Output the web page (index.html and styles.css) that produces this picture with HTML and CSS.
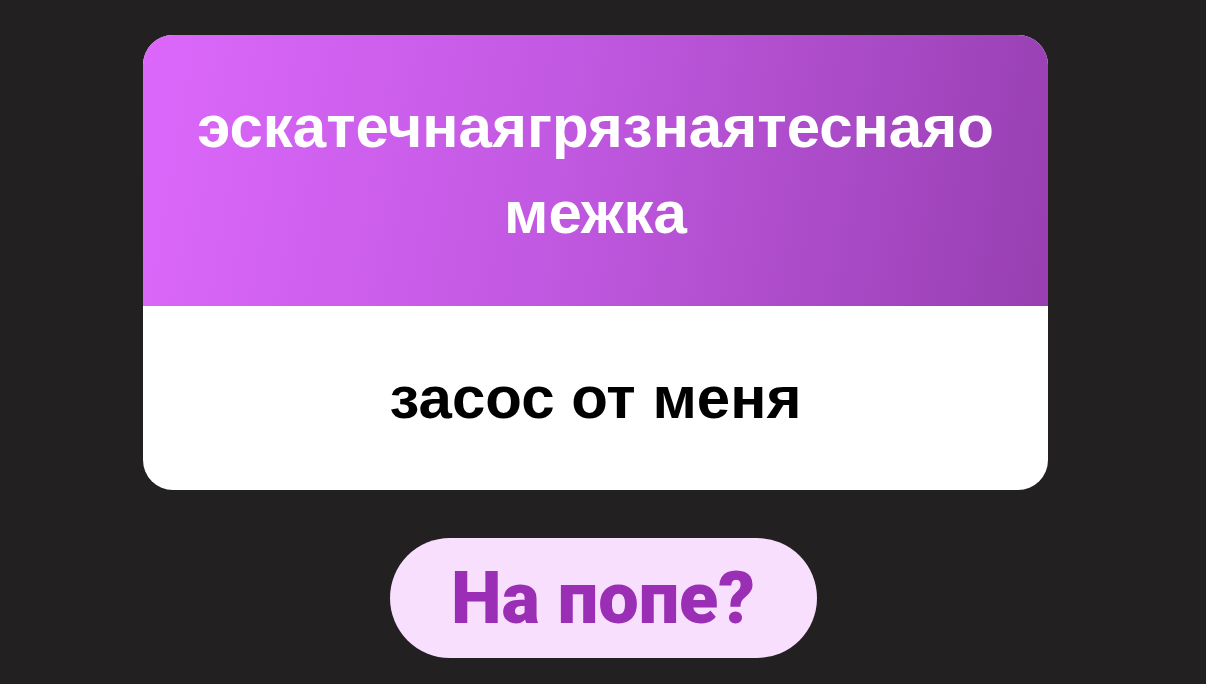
FILE: index.html
```html
<!DOCTYPE html>
<html lang="ru">
<head>
    <meta charset="UTF-8">
    <meta name="viewport" content="width=device-width, initial-scale=1.0">
    <title>Карточка</title>
    <link rel="stylesheet" href="styles.css">
</head>
<body>

    <div class="screen">
        <div class="card">
            <div class="card-front">эскатечнаягрязнаятеснаяомежка</div>
            <div class="card-back">засос от меня</div>
        </div>

        <button class="answer-btn">На попе?</button>
    </div>

</body>
</html>
```

FILE: styles.css
```css
body {
    margin: 0;
    padding: 0;
    background-color: #232022;
    font-family: 'Liberation Sans', Arial, sans-serif;
    height: 100vh;
    overflow: hidden;
}

.screen {
    display: flex;
    flex-direction: column;
    align-items: center;
    gap: 48px;
    padding-top: 35px;
}

.card {
    width: 905px;
    margin-right: 15px; /* card sits a bit left of the button */
    border-radius: 30px;
    overflow: hidden;
    background-color: #fff;
}

.card-front {
    padding: 49px 50px 50px;
    background: linear-gradient(100deg, #dc68fb 0%, #c259e2 45%, #973fb1 100%);
    color: #fff;
    font-size: 60px;
    font-weight: bold;
    line-height: 86px;
    text-align: center;
    word-break: break-all;
}

.card-back {
    padding: 50px;
    color: #000;
    font-size: 60px;
    font-weight: bold;
    line-height: 84px;
    text-align: center;
}

.answer-btn {
    width: 427px;
    height: 120px;
    border: none;
    border-radius: 60px;
    background-color: #f8dffd;
    color: #9a2eb4;
    font-family: Roboto, sans-serif;
    font-size: 72px;
    font-weight: 900;
    cursor: pointer;
}
```
